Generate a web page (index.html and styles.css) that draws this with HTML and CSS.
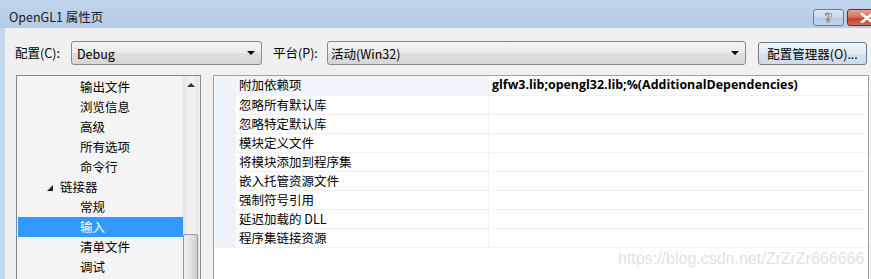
FILE: index.html
```html
<!DOCTYPE html>
<html lang="zh-CN">
<head>
<meta charset="utf-8">
<title>OpenGL1 属性页</title>
<link rel="stylesheet" href="styles.css">
</head>
<body>
<div class="window">
  <div class="titlebar">
    <span class="title">OpenGL1 属性页</span>
    <div class="caption-buttons">
      <div class="cap-btn help">?</div>
      <div class="cap-btn close">
        <svg width="14" height="10" viewBox="0 0 14 10"><path d="M2 1 L12 9 M12 1 L2 9" stroke="#fff" stroke-width="2.6" stroke-linecap="square"/></svg>
      </div>
    </div>
  </div>
  <div class="client">
    <div class="config-row">
      <span class="label label-config">配置(C):</span>
      <div class="combo combo-config"><span>Debug</span><i class="arrow"></i></div>
      <span class="label label-platform">平台(P):</span>
      <div class="combo combo-platform"><span>活动(Win32)</span><i class="arrow"></i></div>
      <div class="button">配置管理器(O)...</div>
    </div>
    <div class="panels">
      <div class="tree">
        <div class="tree-items">
          <div class="item l2">输出文件</div>
          <div class="item l2">浏览信息</div>
          <div class="item l2">高级</div>
          <div class="item l2">所有选项</div>
          <div class="item l2">命令行</div>
          <div class="item l1"><i class="expander"></i>链接器</div>
          <div class="item l2">常规</div>
          <div class="item l2 selected">输入</div>
          <div class="item l2">清单文件</div>
          <div class="item l2">调试</div>
        </div>
        <div class="scrollbar">
          <div class="sb-up"><i></i></div>
          <div class="sb-thumb"></div>
        </div>
      </div>
      <div class="grid">
        <div class="row current"><div class="gutter"></div><div class="name">附加依赖项</div><div class="value">glfw3.lib;opengl32.lib;%(AdditionalDependencies)</div></div>
        <div class="row"><div class="gutter"></div><div class="name">忽略所有默认库</div><div class="value"></div></div>
        <div class="row"><div class="gutter"></div><div class="name">忽略特定默认库</div><div class="value"></div></div>
        <div class="row"><div class="gutter"></div><div class="name">模块定义文件</div><div class="value"></div></div>
        <div class="row"><div class="gutter"></div><div class="name">将模块添加到程序集</div><div class="value"></div></div>
        <div class="row"><div class="gutter"></div><div class="name">嵌入托管资源文件</div><div class="value"></div></div>
        <div class="row"><div class="gutter"></div><div class="name">强制符号引用</div><div class="value"></div></div>
        <div class="row"><div class="gutter"></div><div class="name">延迟加载的 DLL</div><div class="value"></div></div>
        <div class="row"><div class="gutter"></div><div class="name">程序集链接资源</div><div class="value"></div></div>
        <div class="watermark">https://blog.csdn.net/ZrZrZr666666</div>
      </div>
    </div>
  </div>
</div>
</body>
</html>
```
FILE: styles.css
```css
* { box-sizing: border-box; }
html, body { margin: 0; padding: 0; }
body {
  width: 871px;
  height: 279px;
  overflow: hidden;
  font-family: "Noto Sans CJK SC", "Noto Sans", sans-serif;
  font-size: 12px;
  color: #000;
  background: #f0f0f0;
}
.window {
  width: 871px;
  height: 279px;
  display: flex;
  flex-direction: column;
  overflow: hidden;
}
.titlebar {
  height: 28px;
  flex: none;
  background: linear-gradient(#c1d5ec, #b4cbe6);
  display: flex;
  align-items: flex-start;
  position: relative;
}
.title {
  margin: 9px 0 0 9px;
  font-size: 12.5px;
  line-height: 16px;
  color: #1a1a1a;
}
.caption-buttons {
  position: absolute;
  top: 9px;
  left: 813px;
  display: flex;
  gap: 3px;
}
.cap-btn {
  height: 17px;
  border-radius: 3px;
  display: flex;
  align-items: center;
  justify-content: center;
  flex: none;
}
.help {
  width: 31px;
  border: 1px solid #6b7d93;
  background: linear-gradient(#dae6f3 0%, #c7d8ec 50%, #b4c9e2 51%, #c5d7ec 100%);
  color: #fff;
  font-family: "DejaVu Sans", sans-serif;
  font-weight: bold;
  font-size: 13px;
  -webkit-text-stroke: 0.6px #3c4b5c;
}
.close {
  width: 40px;
  border: 1px solid #6e2a22;
  background: linear-gradient(#e7a293 0%, #d46f5e 50%, #c04130 51%, #d26a55 100%);
}
.client {
  flex: 1;
  background: #f0f0f0;
  border-left: 5px solid #c3d6ec;
  padding: 13px 0 0 11px;
  display: flex;
  flex-direction: column;
  min-height: 0;
}
.config-row {
  display: flex;
  align-items: center;
  height: 24px;
}
.label { line-height: 24px; flex: none; white-space: nowrap; font-size: 12.5px; }
.label-config { margin-left: -1px; width: 56px; }
.label-platform { margin-left: 11px; width: 54px; }
.combo {
  height: 24px;
  border: 1px solid #8a8a8a;
  border-radius: 3px;
  background: linear-gradient(#f4f4f4 0%, #ebebeb 50%, #dfdfdf 51%, #d6d6d6 100%);
  display: flex;
  align-items: center;
  padding-left: 5px;
  font-size: 12.5px;
  flex: none;
}
.combo-config { width: 191px; }
.combo-platform { width: 419px; padding-left: 3px; }
.combo span { flex: 1; }
.arrow {
  width: 0; height: 0;
  border-left: 4px solid transparent;
  border-right: 4px solid transparent;
  border-top: 4px solid #000;
  margin-right: 6px;
}
.button {
  width: 109px;
  height: 23px;
  margin-left: 12px;
  margin-top: 1px;
  border: 1px solid #707883;
  border-radius: 3px;
  background: linear-gradient(#eef4fa 0%, #e2ecf6 50%, #d3e1ef 51%, #cddcec 100%);
  display: flex;
  align-items: center;
  justify-content: center;
  font-size: 12.5px;
  flex: none;
}
.panels {
  display: flex;
  margin-top: 10px;
  gap: 12px;
  flex: 1;
  min-height: 0;
}
.tree {
  width: 185px;
  flex: none;
  border: 1px solid #828790;
  border-bottom: none;
  background: #f4f4f4;
  display: flex;
  padding: 1px 1px 0 1px;
  overflow: hidden;
}
.tree-items { flex: 1; }
.item {
  height: 20px;
  line-height: 20px;
  white-space: nowrap;
  font-size: 12.5px;
}
.l2 { padding-left: 62px; }
.l1 { padding-left: 29px; display: flex; align-items: center; }
.expander {
  width: 0; height: 0;
  border-left: 6px solid transparent;
  border-bottom: 6px solid #222;
  margin-right: 7px;
  margin-top: 1px;
}
.selected { background: #3399ff; color: #fff; }
.scrollbar {
  width: 16px;
  background: linear-gradient(90deg, #e3e3e3, #f0f0f0 30%, #f0f0f0 70%, #e3e3e3);
  position: relative;
  margin-top: -1px;
  overflow: hidden;
}
.sb-up { height: 18px; display: flex; justify-content: center; padding-top: 7px; }
.sb-up i {
  width: 0; height: 0;
  border-left: 4px solid transparent;
  border-right: 4px solid transparent;
  border-bottom: 4px solid #333;
}
.sb-thumb {
  position: absolute;
  left: 0; top: 158px;
  width: 15px; height: 60px;
  border: 1px solid #979797;
  border-radius: 2px;
  background: linear-gradient(90deg, #f0f0f0, #e6e6e6 40%, #d0d0d0 100%);
}
.grid {
  flex: 1;
  border: 1px solid #a0a0a0;
  border-bottom: none;
  border-right: 1px solid #a0a0a0;
  margin-right: 2px;
  background: #fff;
  position: relative;
  padding-left: 1px;
  overflow: hidden;
}
.row {
  display: flex;
  height: 19px;
  border-bottom: 1px solid #eef1f6;
}
.row:first-child { height: 20px; }
.gutter { width: 21px; background: #eef3fa; }
.name {
  width: 252px;
  padding-left: 3px;
  line-height: 18px;
  white-space: nowrap;
  font-size: 12.5px;
}
.row.current .name { background: #f2f6fc; }
.value {
  flex: 1;
  border-left: 1px solid #eef1f6;
  padding-left: 3px;
  line-height: 18px;
  font-family: "Open Sans", sans-serif;
  font-weight: bold;
  font-size: 12.45px;
  white-space: nowrap;
}
.watermark {
  position: absolute;
  left: 404px;
  top: 174px;
  font-family: "Liberation Sans", Arial, sans-serif;
  font-size: 16px;
  color: #e2e2e2;
  white-space: nowrap;
}
```
